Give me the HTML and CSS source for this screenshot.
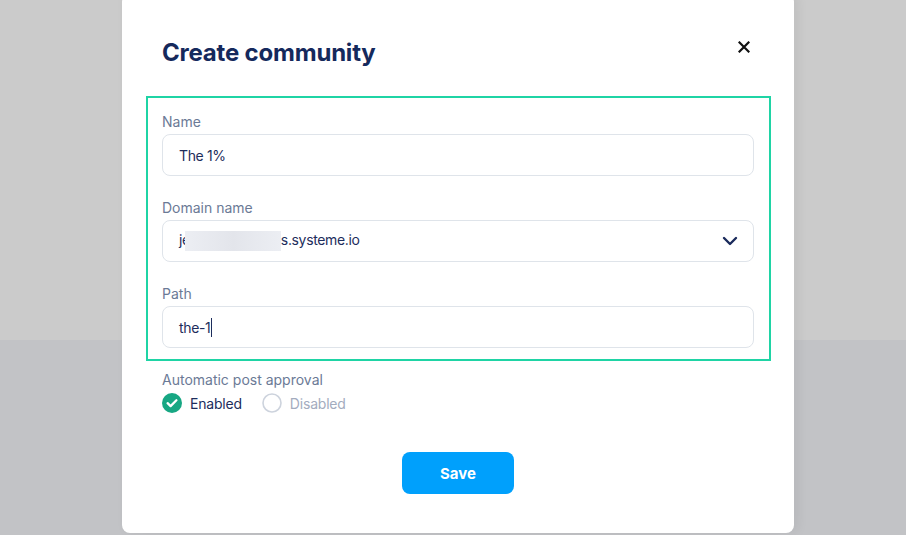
FILE: index.html
```html
<!DOCTYPE html>
<html>
<head>
    <meta name="viewport" content="width=device-width, initial-scale=1.0">
    <link rel="stylesheet" href="styles.css">
</head>
<body>
<div class="modal">
    <div class="modal-head">
        <h1>Create community</h1>
        <button class="close" aria-label="Close">
            <svg width="12" height="12" viewBox="0 0 12 12"><path d="M1.5 1.5 L10.5 10.5 M10.5 1.5 L1.5 10.5" stroke="#111" stroke-width="2.2" stroke-linecap="square"/></svg>
        </button>
    </div>

    <div class="highlight">
        <div class="field">
            <label>Name</label>
            <div class="input">The 1%</div>
        </div>

        <div class="field">
            <label>Domain name</label>
            <div class="input select">
                <span>je<span class="blur"></span>s.systeme.io</span>
                <svg width="16" height="10" viewBox="0 0 16 10"><path d="M2 2 L8 8 L14 2" fill="none" stroke="#1b2b5c" stroke-width="2.4" stroke-linecap="round" stroke-linejoin="round"/></svg>
            </div>
        </div>

        <div class="field last">
            <label>Path</label>
            <div class="input">the-1<span class="caret"></span></div>
        </div>
    </div>

    <div class="approval">
        <label>Automatic post approval</label>
        <div class="radios">
            <div class="radio">
                <svg width="20" height="20" viewBox="0 0 20 20"><circle cx="10" cy="10" r="10" fill="#17a783"/><path d="M5.6 10.2 L8.6 13.1 L14.4 7.3" fill="none" stroke="#fff" stroke-width="2.3" stroke-linecap="round" stroke-linejoin="round"/></svg>
                <span>Enabled</span>
            </div>
            <div class="radio off">
                <svg width="20" height="20" viewBox="0 0 20 20"><circle cx="10" cy="10" r="9" fill="#fff" stroke="#cdd3dd" stroke-width="1.6"/></svg>
                <span>Disabled</span>
            </div>
        </div>
    </div>

    <div class="actions">
        <button class="save">Save</button>
    </div>
</div>
</body>
</html>
```

FILE: styles.css
```css
body {
    margin: 0;
    height: 535px;
    overflow: hidden;
    font-family: Inter, "Noto Sans", sans-serif;
    background: linear-gradient(#cbcbcb 0, #cbcbcb 340px, #c2c3c6 340px);
}

.modal {
    box-sizing: border-box;
    width: 672px;
    height: 539px;
    margin: -6px 0 0 122px;
    padding: 44px 40px 0 40px;
    background: #fff;
    border-radius: 8px;
    box-shadow: 4px 0 12px rgba(0, 0, 0, 0.06);
}

.modal-head {
    display: flex;
    justify-content: space-between;
    align-items: flex-start;
    height: 58px;
}

h1 {
    margin: 0;
    font-size: 24px;
    line-height: 30px;
    font-weight: 700;
    color: #15295c;
    letter-spacing: -0.2px;
}

.close {
    border: none;
    background: none;
    padding: 0;
    margin: 3px 4px 0 0;
    width: 12px;
    height: 12px;
    cursor: pointer;
}

.close svg {
    display: block;
}

.highlight {
    margin: 0 -17px 0 -16px;
    padding: 14px 15px 11px 14px;
    border: 2px solid #1fd4a5;
}

.field {
    margin-bottom: 22px;
}

.field.last {
    margin-bottom: 0;
}

label {
    display: block;
    font-size: 14px;
    line-height: 20px;
    color: #6b7a96;
    margin-bottom: 2px;
}

.input {
    box-sizing: border-box;
    height: 42px;
    border: 1px solid #dfe4ea;
    border-radius: 8px;
    padding: 0 16px;
    display: flex;
    align-items: center;
    font-size: 14px;
    letter-spacing: -0.35px;
    color: #1d2d5c;
}

.select {
    justify-content: space-between;
    padding-right: 15px;
}

.blur {
    display: inline-block;
    width: 96px;
    height: 20px;
    margin-left: -5px;
    vertical-align: middle;
    background: linear-gradient(90deg, #eceef3, #e3e5eb 50%, #eceef3);
}

.caret {
    display: inline-block;
    width: 1px;
    height: 19px;
    margin-left: 1px;
    background: #1d2d5c;
    vertical-align: middle;
}

.approval {
    margin-top: 9px;
}

.approval label {
    margin-bottom: 3px;
}

.radios {
    display: flex;
    gap: 20px;
}

.radio {
    display: flex;
    align-items: center;
    gap: 8px;
    font-size: 14px;
    letter-spacing: -0.2px;
    color: #1d2d5c;
}

.radio svg {
    display: block;
}

.radio.off {
    color: #a3acbe;
}

.actions {
    display: flex;
    justify-content: center;
    margin-top: 39px;
}

.save {
    width: 112px;
    height: 42px;
    border: none;
    border-radius: 8px;
    background: #00a0fc;
    color: #fff;
    font-family: Inter, sans-serif;
    font-size: 15px;
    font-weight: 700;
    cursor: pointer;
}
```
